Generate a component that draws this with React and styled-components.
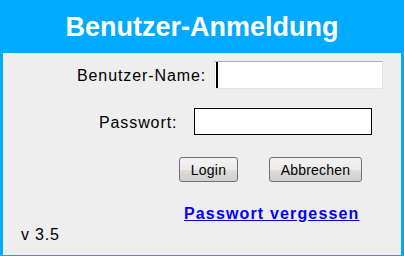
import React from 'react';
import styled, {createGlobalStyle} from 'styled-components';

const Global = createGlobalStyle`
    html, body {
        margin: 0;
        padding: 0;
        background: #ffffff;
    }
    * {
        box-sizing: border-box;
    }
`;

const Frame = styled.div`
    width: 404px;
    height: 256px;
    display: flex;
    flex-direction: column;
    border: 3px solid #00aaff;
    border-top: 0;
    border-bottom-width: 1px;
    background: #eeeeee;
    font-family: "Liberation Sans", Arial, sans-serif;
    color: #000000;
`;

const Header = styled.div`
    height: 53px;
    margin: 0 -3px;
    background: #00aaff;
    color: #ffffff;
    font-size: 27px;
    font-weight: bold;
    display: flex;
    align-items: center;
    justify-content: center;
    padding-top: 2px;
`;

const Row = styled.div`
    display: flex;
    align-items: center;
    padding-left: ${p => p.$indent}px;
    margin-top: ${p => p.$top}px;
    gap: ${p => p.$gap || 0}px;
`;

const Label = styled.label`
    font-size: 16px;
    letter-spacing: 0.9px;
    width: ${p => p.$width}px;
    padding-top: 2px;
`;

const InputWrap = styled.div`
    position: relative;
`;

// kursor im aktiven feld
const Caret = styled.span`
    position: absolute;
    left: 2px;
    top: 1px;
    width: 2px;
    height: 26px;
    background: #000000;
`;

const TextField = styled.input`
    display: block;
    width: ${p => p.$width}px;
    height: ${p => p.$height}px;
    background: #ffffff;
    outline: none;
    padding: 0 4px;
    font-family: inherit;
    font-size: 14px;
    border: 1px solid ${p => (p.$soft ? '#e2e3ea' : '#000000')};
    border-top-color: ${p => (p.$soft ? '#abadb3' : '#000000')};
`;

const Button = styled.button`
    width: ${p => p.$width}px;
    height: 25px;
    padding: 0;
    border: 1px solid #707070;
    border-radius: 3px;
    background: linear-gradient(#f2f2f2 0%, #ebebeb 50%, #dddddd 51%, #cfcfcf 100%);
    font-family: "Liberation Sans", Arial, sans-serif;
    font-size: 14px;
    letter-spacing: 0.2px;
    color: #000000;
`;

const ForgotLink = styled.a`
    font-size: 16px;
    font-weight: bold;
    letter-spacing: 1.15px;
    color: #0000ff;
    text-decoration: underline;
    line-height: 18px;
`;

const Version = styled.div`
    font-size: 16px;
    letter-spacing: 0.8px;
    line-height: 18px;
    padding-left: 18px;
    margin-top: 3px;
`;

const App = () => {
    return (
        <>
            <Global/>
            <Frame>
                <Header>Benutzer-Anmeldung</Header>
                <Row $indent={74} $top={8}>
                    <Label $width={137}>Benutzer-Name:</Label>
                    <InputWrap>
                        <TextField $width={169} $height={28} $soft/>
                        <Caret/>
                    </InputWrap>
                </Row>
                <Row $indent={96} $top={19}>
                    <Label $width={95}>Passwort:</Label>
                    <TextField type="password" $width={178} $height={27}/>
                </Row>
                <Row $indent={176} $top={22} $gap={31}>
                    <Button $width={59}>Login</Button>
                    <Button $width={93}>Abbrechen</Button>
                </Row>
                <Row $indent={181} $top={23}>
                    <ForgotLink href="#">Passwort vergessen</ForgotLink>
                </Row>
                <Version>v 3.5</Version>
            </Frame>
        </>
    );
};

export default App;
